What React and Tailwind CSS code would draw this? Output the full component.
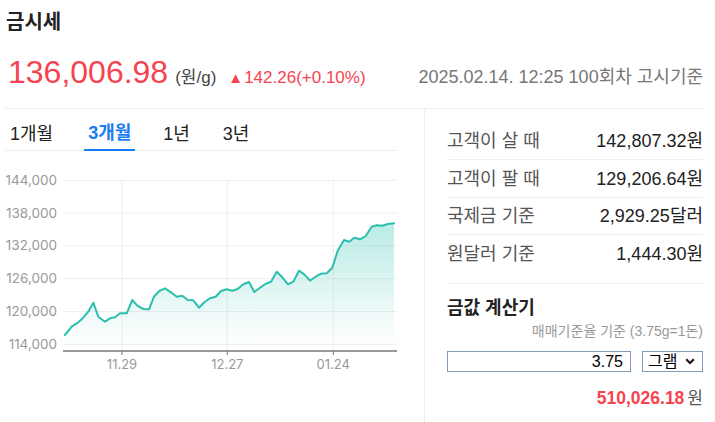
import React from "react";

const pts = [
  [65,335],[71.7,326.7],[78.3,322.3],[83.3,317.7],[88.3,311.7],[93.3,302.7],[98.3,316.7],[105,321.7],[110,318.3],[115,317.3],[120,313.3],[126.7,313.3],[132.3,300],[137.3,305.7],[143.3,309],[149,309.3],[154,296.7],[159.3,291],[165,288.3],[171,292.3],[176.7,296.7],[182.3,295.7],[187.7,300],[193.3,300.3],[199,307.7],[204.3,302.3],[210,298.3],[215.7,296.7],[221,291],[226.7,289.3],[232.3,290.7],[237.7,289],[243.3,284.3],[249,282],[254.3,292],[260,287.7],[265.7,283.7],[271,281.7],[276.7,271.7],[282.3,277.3],[288,284.3],[293.3,281.7],[299,270.7],[304.3,274.3],[310,280.7],[315.7,276.7],[321,273.7],[326.7,273.3],[332.3,267.7],[337.7,250.7],[344,240],[349.3,241.7],[354.3,237.7],[360,239.3],[365.7,236],[371.7,226.7],[376.7,225.3],[382.3,225.7],[387.7,224],[394,223.3]
];

function Chart() {
  const line = pts.map((p, i) => (i ? "L" : "M") + p[0] + " " + p[1]).join(" ");
  const area = line + ` L394 345 L65 345 Z`;
  const ys = [
    [180.3, "144,000"],
    [213.1, "138,000"],
    [245.9, "132,000"],
    [278.7, "126,000"],
    [311.5, "120,000"],
    [344.3, "114,000"],
  ];
  const xs = [
    [122, "11.29"],
    [227.3, "12.27"],
    [333.3, "01.24"],
  ];
  return (
    <svg width="392" height="271" viewBox="5 151 392 271" className="block">
      <defs>
        <linearGradient id="fillg" x1="0" y1="0" x2="0" y2="1">
          <stop offset="0" stopColor="#2bbfae" stopOpacity="0.32" />
          <stop offset="1" stopColor="#2bbfae" stopOpacity="0" />
        </linearGradient>
      </defs>
      {ys.map(([y, t]) => (
        <g key={t}>
          <line x1="63" x2="397" y1={y} y2={y} stroke="#eeeeee" strokeWidth="1" />
          <text x="57" y={y + 4.5} textAnchor="end" fontSize="13.5" fill="#999" fontFamily="Inter, 'Liberation Sans', sans-serif">{t}</text>
        </g>
      ))}
      {xs.map(([x, t]) => (
        <g key={t}>
          <line x1={x} x2={x} y1="180" y2="351" stroke="#eeeeee" strokeWidth="1" />
          <line x1={x} x2={x} y1="351" y2="355" stroke="#777" strokeWidth="1" />
          <text x={x} y="368.5" textAnchor="middle" fontSize="13" fill="#999" fontFamily="Inter, 'Liberation Sans', sans-serif">{t}</text>
        </g>
      ))}
      <path d={area} fill="url(#fillg)" />
      <path d={line} fill="none" stroke="#2bbfae" strokeWidth="2" strokeLinejoin="round" strokeLinecap="round" />
      <line x1="63" x2="397" y1="351" y2="351" stroke="#777" strokeWidth="1.5" />
    </svg>
  );
}

function Row({ label, value, unit, h, border }) {
  return (
    <div className={"flex items-center justify-between " + h + (border ? " border-b border-[#eeeeee]" : "")}>
      <span className="text-[18px] leading-[22px] text-[#555]">{label}</span>
      <span className="text-[18px] leading-[22px] text-[#222]">{value}{unit}</span>
    </div>
  );
}

export default function App() {
  return (
    <div className="w-[715px] h-[422px] bg-white overflow-hidden text-[#222]" style={{ fontFamily: "'Liberation Sans', 'Noto Sans CJK KR', sans-serif" }}>
      <div className="w-[698px] ml-[5px]">
        <h1 className="pt-[10px] pl-[1px] text-[20px] font-bold leading-[25px] text-[#222]">금시세</h1>
        <div className="flex items-baseline pt-[21px] pb-[20px] pl-[3px] border-b border-[#eeeeee] h-[74px]">
          <span className="text-[32px] leading-[32px] text-[#f5444f]">136,006.98</span>
          <span className="ml-[7px] text-[17px] leading-[20px] text-[#444]">(원/g)</span>
          <span className="ml-[12px] text-[17px] leading-[20px] text-[#f5444f] flex items-baseline">
            <span className="text-[15px] leading-[20px] mr-[1px]">▲</span>142.26(+0.10%)
          </span>
          <span className="ml-auto text-[18px] leading-[20px] text-[#777]">2025.02.14. 12:25 100회차 고시기준</span>
        </div>
        <div className="flex">
          <div className="w-[420px] border-r border-[#eeeeee] h-[313px]">
            <div className="w-[392px] flex pl-[1px] border-b border-[#eeeeee] h-[42px]">
              <div className="px-[4px] pt-[8px] flex items-center text-[18px] leading-[24px] text-[#222]">1개월</div>
              <div className="ml-[27px] px-[4px] pt-[8px] flex items-center text-[18px] leading-[24px] font-bold text-[#1a7cf5] border-b-2 border-[#1a7cf5] -mb-[1px]">3개월</div>
              <div className="ml-[24px] px-[4px] pt-[8px] flex items-center text-[18px] leading-[24px] text-[#222]">1년</div>
              <div className="ml-[25px] px-[4px] pt-[8px] flex items-center text-[18px] leading-[24px] text-[#222]">3년</div>
            </div>
            <Chart />
          </div>
          <div className="flex-1 pl-[22px] pt-[13px]">
            <Row label="고객이 살 때" value="142,807.32" unit="원" h="h-[38px]" border />
            <Row label="고객이 팔 때" value="129,206.64" unit="원" h="h-[38px]" border />
            <Row label="국제금 기준" value="2,929.25" unit="달러" h="h-[37px]" border />
            <Row label="원달러 기준" value="1,444.30" unit="원" h="h-[37px]" />
            <div className="mt-[11px] border-t border-[#eeeeee]">
              <div className="pt-[14px] text-[18px] leading-[20px] font-bold text-[#222]">금값 계산기</div>
              <div className="mt-[5px] text-right text-[14px] leading-[16px] text-[#999]">매매기준율 기준 (3.75g=1돈)</div>
              <div className="mt-[12px] flex items-center justify-between">
                <input
                  readOnly
                  value="3.75"
                  className="w-[184px] h-[21px] border border-[#7f9db9] text-right pr-[7px] text-[16px] text-black outline-none"
                  style={{ fontFamily: "'Liberation Sans', sans-serif" }}
                />
                <div className="w-[61px] h-[21px] border border-[#7f9db9] flex items-center pl-[5px] gap-[8px] text-[16px] leading-[18px] text-black">
                  <span>그램</span>
                  <svg width="10" height="7" viewBox="0 0 10 7">
                    <path d="M1.2 1.2 L5 5 L8.8 1.2" fill="none" stroke="#111" strokeWidth="2" />
                  </svg>
                </div>
              </div>
              <div className="mt-[16px] flex justify-end items-baseline">
                <span className="text-[17.5px] leading-[20px] font-bold text-[#f5444f]">510,026.18</span>
                <span className="ml-[3px] text-[17px] leading-[20px] text-[#555]">원</span>
              </div>
            </div>
          </div>
        </div>
      </div>
    </div>
  );
}
